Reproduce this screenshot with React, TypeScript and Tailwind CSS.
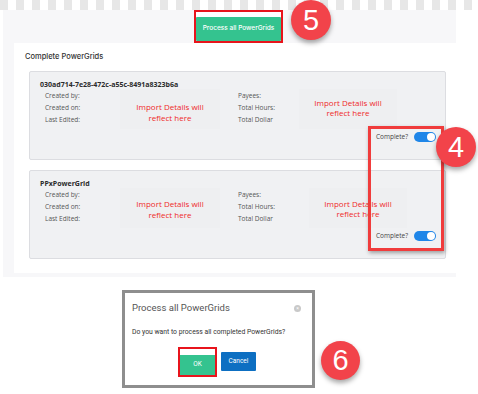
import React from 'react'

const Badge: React.FC<{ n: string; className: string }> = ({ n, className }) => (
  <div
    className={`absolute flex items-center justify-center rounded-full bg-[#f2434a] text-white shadow-[0_3px_5px_rgba(0,0,0,0.35)] font-['Liberation_Sans',Arial,sans-serif] text-[29px] leading-none ${className}`}
  >
    {n}
  </div>
)

const Toggle: React.FC = () => (
  <div className="flex items-center gap-[6px]">
    <span className="text-[6.5px] text-[#444] font-['Open_Sans',sans-serif]">Complete?</span>
    <div className="w-[22px] h-[10px] rounded-full bg-[#1f86e8] flex items-center justify-end pr-[1px]">
      <div className="w-[8px] h-[8px] rounded-full bg-white" />
    </div>
  </div>
)

type CardProps = {
  title: string
  leftText: string
  rightText: string
  rightBox: string
}

const GridCard: React.FC<CardProps> = ({ title, leftText, rightText, rightBox }) => (
  <div className="h-[89px] ml-[15px] w-[417px] bg-[#f0f1f3] border border-[#dcdde1] rounded-[2px] flex flex-col font-['Open_Sans',sans-serif]">
    <div className="pl-[10px] pt-[8px] text-[7px] leading-[10px] font-bold text-[#2b2b2b]">{title}</div>
    <div className="flex">
      <div className="pl-[15px] w-[90px] flex flex-col text-[6.5px] leading-[12px] text-[#555]">
        <span>Created by:</span>
        <span>Created on:</span>
        <span>Last Edited:</span>
      </div>
      <div className={`w-[100px] h-[40px] -mt-[1px] bg-[#eeeff1] flex flex-col items-center text-[8px] text-[#ee2a2a] ${leftText}`}>
        <span>Import Details will</span>
        <span>reflect here</span>
      </div>
      <div className="pl-[18px] w-[77px] flex flex-col text-[6.5px] leading-[12px] text-[#555]">
        <span>Payees:</span>
        <span>Total Hours:</span>
        <span>Total Dollar</span>
      </div>
      <div className={`h-[40px] -mt-[1px] bg-[#eeeff1] flex flex-col items-center text-[8px] text-[#ee2a2a] ${rightBox} ${rightText}`}>
        <span>Import Details will</span>
        <span>reflect here</span>
      </div>
    </div>
    <div className="mt-auto mb-[17px] flex justify-end pr-[9px]">
      <Toggle />
    </div>
  </div>
)

export default function App() {
  return (
    <div className="relative w-[478px] h-[394px] bg-white overflow-hidden">
      {/* checker strip */}
      <div className="h-[10px] bg-[repeating-linear-gradient(90deg,#e7e7e7_0_8px,#ffffff_8px_16px)]" />

      <div className="ml-[3px] w-[453px] bg-[#f7f7f9]">
        <div className="h-[33px] flex items-center pl-[191px]">
          <div className="border-2 border-[#e8141c] p-[0px] bg-white">
            <button className="w-[85px] h-[24px] bg-[#34c38f] text-white text-[6.5px] font-medium font-['Inter',sans-serif] rounded-[1px]">
              Process all PowerGrids
            </button>
          </div>
        </div>
        <div className="flex pb-[4px]">
          <div className="w-[11px]" />
          <div className="flex-1 h-[230px] bg-white flex flex-col">
            <div className="pl-[11px] pt-[9px] h-[28px] text-[7.5px] leading-[10px] font-medium text-[#333] font-['Inter',sans-serif]">
              Complete PowerGrids
            </div>
            <div className="flex flex-col gap-[10px]">
              <GridCard
                title="030ad714-7e28-472c-a55c-8491a8323b6a"
                leftText="pt-[12px] leading-[11px]"
                rightText="pt-[9px] leading-[10px]"
                rightBox="ml-[2px] w-[98px]"
              />
              <GridCard
                title="PPxPowerGrid"
                leftText="pt-[10px] leading-[11px]"
                rightText="pt-[11px] leading-[10px]"
                rightBox="ml-[12px] w-[98px]"
              />
            </div>
          </div>
        </div>
      </div>

      {/* modal */}
      <div className="mt-[13px] ml-[122px] w-[193px] h-[98px] border-[3px] border-[#8e8e8e] bg-white font-['Roboto',sans-serif]">
        <div className="flex items-center justify-between pl-[7px] pr-[11px] pt-[9px]">
          <span className="text-[9.5px] leading-[12px] text-[#555]">Process all PowerGrids</span>
          <div className="w-[7px] h-[7px] rounded-full bg-[#c9c9c9] flex items-center justify-center text-white text-[5px] leading-none">
            ×
          </div>
        </div>
        <div className="pl-[7px] pt-[13px] text-[6.8px] leading-[10px] text-[#333]">
          Do you want to process all completed PowerGrids?
        </div>
        <div className="flex items-center pl-[53px] pt-[10px] gap-[4px]">
          <div className="border-2 border-[#e8141c]">
            <button className="w-[35px] h-[20px] bg-[#34c38f] text-white text-[6.5px]">OK</button>
          </div>
          <button className="w-[35px] h-[19px] bg-[#0d6fc2] text-white text-[6.5px] rounded-[1px]">Cancel</button>
        </div>
      </div>

      {/* annotations */}
      <div className="absolute left-[368px] top-[126px] w-[76px] h-[125px] border-[3px] border-[#f03c3c] shadow-[1px_2px_4px_rgba(0,0,0,0.35)]" />
      <Badge n="5" className="left-[291px] top-[0px] w-[40px] h-[40px]" />
      <Badge n="4" className="left-[436px] top-[127px] w-[40px] h-[40px]" />
      <Badge n="6" className="left-[321px] top-[341px] w-[39px] h-[39px]" />
    </div>
  )
}
